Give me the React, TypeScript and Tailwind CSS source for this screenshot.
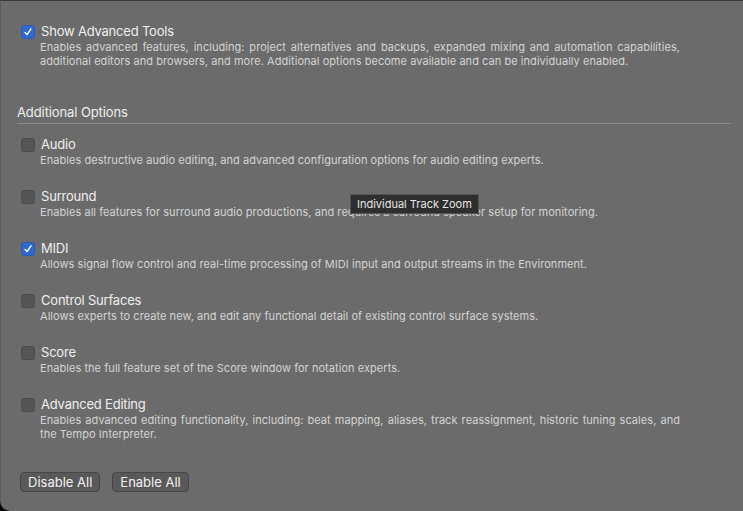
import React from 'react';

interface OptionProps {
  title: string;
  description: string;
  checked?: boolean;
}

const Checkbox: React.FC<{ checked?: boolean }> = ({ checked }) => (
  <div
    className={
      checked
        ? 'w-[14px] h-[14px] rounded-[3px] bg-[#2f6ad0] border border-[#2a5bb0] flex items-center justify-center shrink-0'
        : 'w-[14px] h-[14px] rounded-[3px] bg-[#555555] border border-[#4c4c4c] shrink-0'
    }
  >
    {checked && (
      <svg width="10" height="10" viewBox="0 0 10 10" fill="none">
        <path d="M2 5.4 L4 7.6 L8 1.8" stroke="white" strokeWidth="1.4" strokeLinecap="round" strokeLinejoin="round" />
      </svg>
    )}
  </div>
);

const Option: React.FC<OptionProps> = ({ title, description, checked }) => (
  <div className="flex gap-[6px]">
    <div className="h-[17px] flex items-center">
      <Checkbox checked={checked} />
    </div>
    <div className="flex flex-col">
      <div className="text-[13px] leading-[17px] tracking-[-0.2px] text-[#efefef]">{title}</div>
      <div className="text-[11px] leading-[14px] tracking-[0.05px] text-[#d4d4d4] w-[640px] text-justify -ml-px">
        {description}
      </div>
    </div>
  </div>
);

const options: OptionProps[] = [
  {
    title: 'Audio',
    description: 'Enables destructive audio editing, and advanced configuration options for audio editing experts.',
  },
  {
    title: 'Surround',
    description: 'Enables all features for surround audio productions, and requires a surround speaker setup for monitoring.',
  },
  {
    title: 'MIDI',
    description: 'Allows signal flow control and real-time processing of MIDI input and output streams in the Environment.',
    checked: true,
  },
  {
    title: 'Control Surfaces',
    description: 'Allows experts to create new, and edit any functional detail of existing control surface systems.',
  },
  {
    title: 'Score',
    description: 'Enables the full feature set of the Score window for notation experts.',
  },
  {
    title: 'Advanced Editing',
    description:
      'Enables advanced editing functionality, including: beat mapping, aliases, track reassignment, historic tuning scales, and the Tempo Interpreter.',
  },
];

const App: React.FC = () => {
  return (
    <div className="w-[743px] h-[511px] bg-black" style={{ fontFamily: 'Inter, "Noto Sans", sans-serif' }}>
      <div className="relative w-full h-full bg-[#6b6b6b] border-t border-[#3a3a3a] border-l border-l-[#5c5c5c] rounded-bl-[10px] pt-[22px] pl-[20px] pr-[12px]">
        <Option
          checked
          title="Show Advanced Tools"
          description="Enables advanced features, including: project alternatives and backups, expanded mixing and automation capabilities, additional editors and browsers, and more. Additional options become available and can be individually enabled."
        />

        <div className="mt-[36px] -ml-[4px] text-[13px] leading-4 tracking-[-0.1px] text-[#efefef]">Additional Options</div>
        <div className="mt-[3px] -ml-[4px] h-px bg-[#8a8a8a]" />

        <div className="mt-[12px] flex flex-col gap-[21px]">
          {options.map((o) => (
            <Option key={o.title} {...o} />
          ))}
        </div>

        <div className="mt-[31px] -ml-px flex gap-3">
          <button className="h-5 px-[7px] rounded-[4px] bg-[#595959] border border-[#474747] text-[13px] leading-none text-[#f2f2f2]">
            Disable All
          </button>
          <button className="h-5 px-[7px] rounded-[4px] bg-[#595959] border border-[#474747] text-[13px] leading-none text-[#f2f2f2]">
            Enable All
          </button>
        </div>

        <div className="absolute left-[349px] top-[193px] h-[20px] px-[6px] flex items-center bg-[#2e2e2e] border border-[#555555] text-[11px] text-[#e6e6e6] whitespace-nowrap">
          Individual Track Zoom
        </div>
      </div>
    </div>
  );
};

export default App;
